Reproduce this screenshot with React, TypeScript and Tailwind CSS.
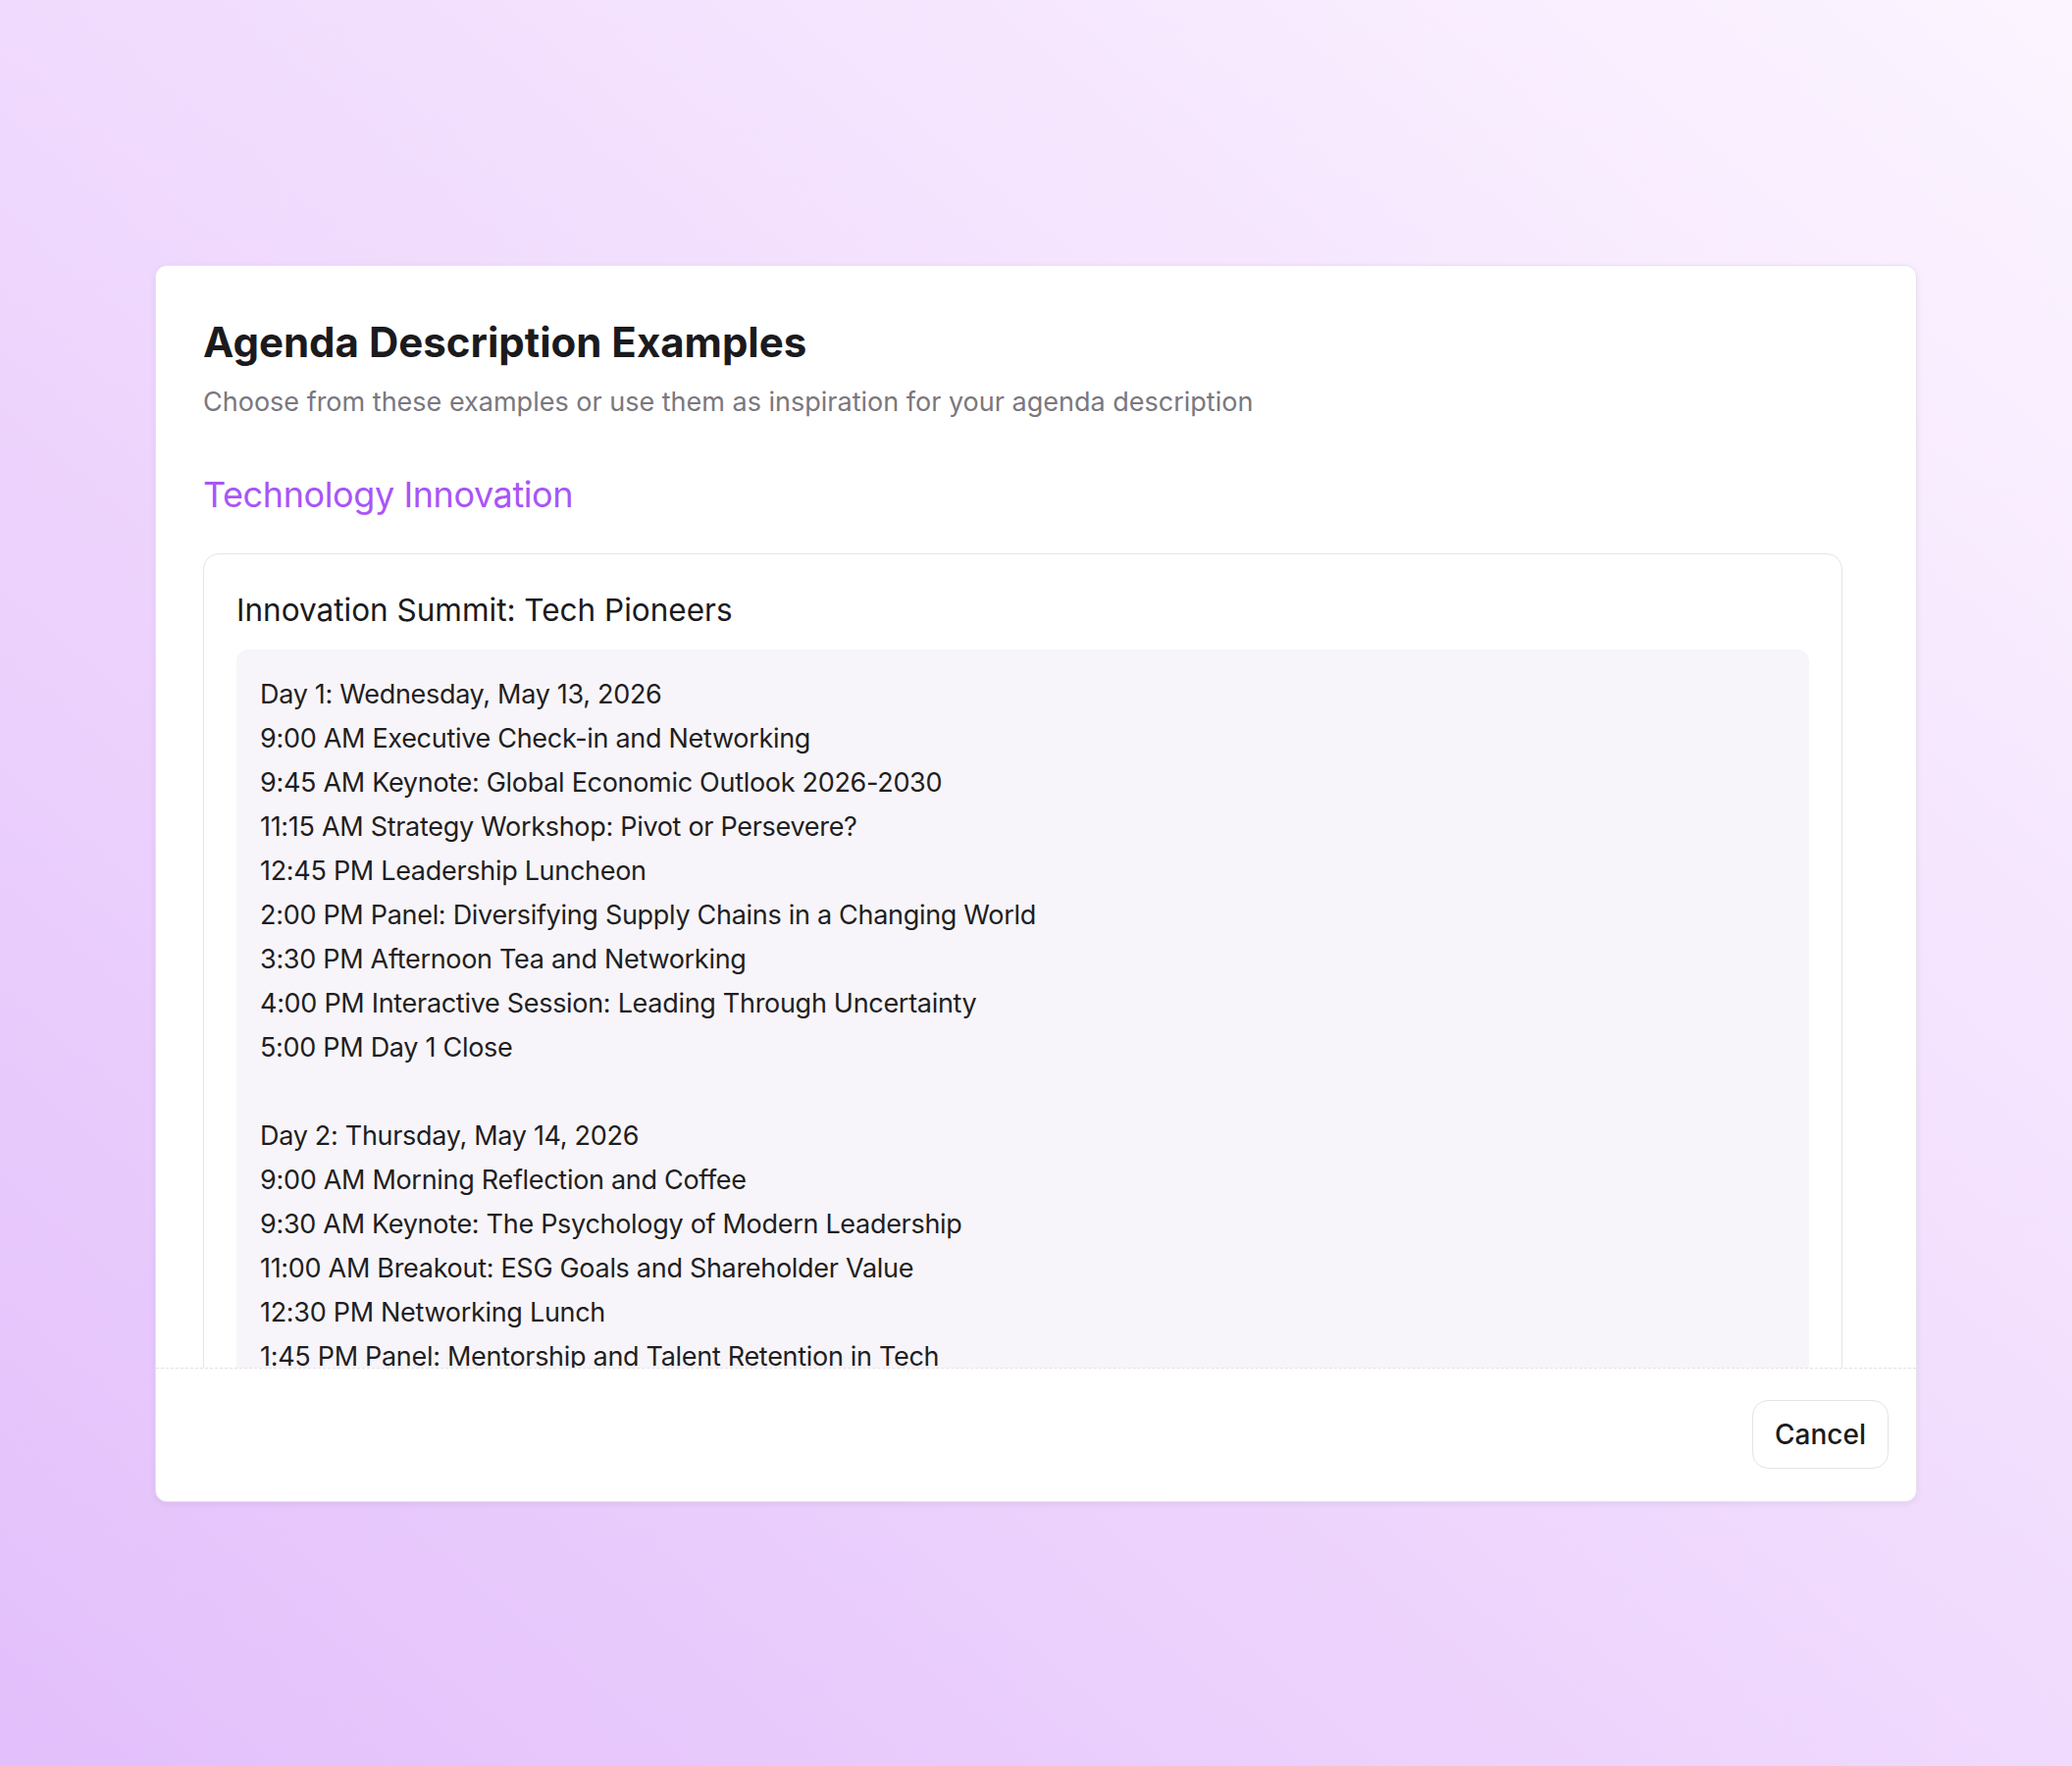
const day1 = [
  "Day 1: Wednesday, May 13, 2026",
  "9:00 AM Executive Check-in and Networking",
  "9:45 AM Keynote: Global Economic Outlook 2026-2030",
  "11:15 AM Strategy Workshop: Pivot or Persevere?",
  "12:45 PM Leadership Luncheon",
  "2:00 PM Panel: Diversifying Supply Chains in a Changing World",
  "3:30 PM Afternoon Tea and Networking",
  "4:00 PM Interactive Session: Leading Through Uncertainty",
  "5:00 PM Day 1 Close",
];

const day2 = [
  "Day 2: Thursday, May 14, 2026",
  "9:00 AM Morning Reflection and Coffee",
  "9:30 AM Keynote: The Psychology of Modern Leadership",
  "11:00 AM Breakout: ESG Goals and Shareholder Value",
  "12:30 PM Networking Lunch",
  "1:45 PM Panel: Mentorship and Talent Retention in Tech",
  "3:00 PM Closing Keynote: Building the Next Decade",
  "4:30 PM Farewell Reception",
];

export default function App() {
  return (
    <div
      className="min-h-screen w-full flex items-center justify-center bg-linear-to-bl from-[#fcf5ff] via-[#f0dafd] to-[#e3bffb]"
      style={{ fontFamily: "Inter, 'Noto Sans', sans-serif" }}
    >
      <div className="w-[1796px] h-[1261px] flex flex-col bg-white rounded-xl border border-[#e6e2ea] shadow-[0_2px_6px_rgba(80,40,120,0.08)] overflow-hidden">

        {/* Scrollable body */}
        <div className="flex-1 overflow-hidden pl-[48px] pr-[75px] pt-[48px]">
          <h2 className="text-[42px] leading-[60px] font-bold text-[#1b1a1d]">
            Agenda Description Examples
          </h2>
          <p className="mt-[11px] text-[27px] leading-[40px] text-[#7a777e]">
            Choose from these examples or use them as inspiration for your agenda description
          </p>

          <h3 className="mt-[50px] text-[36px] leading-[48px] text-[#a855f7] tracking-[-0.4px]">
            Technology Innovation
          </h3>

          <div className="mt-[36px] rounded-2xl border border-[#e6e3e9] bg-white px-[33px] pt-[36px] pb-[33px]">
            <h4 className="text-[31.5px] leading-[42px] text-[#1b1a1d]">
              Innovation Summit: Tech Pioneers
            </h4>
            <div className="mt-[19px] rounded-xl bg-[#f7f5f9] px-[24px] py-[23px] text-[27px] leading-[45px] text-[#1f1e22] tracking-[-0.3px]">
              {day1.map((l) => (
                <div key={l}>{l}</div>
              ))}
              <div className="h-[45px]" />
              {day2.map((l) => (
                <div key={l}>{l}</div>
              ))}
            </div>
          </div>
        </div>

        {/* Footer */}
        <div className="h-[136px] shrink-0 border-t border-dashed border-[#e4e1e7] flex items-center justify-end pr-[28px]">
          <button className="h-[70px] w-[139px] rounded-2xl border border-[#e6e2ea] bg-white text-[28px] font-medium text-[#1b1a1d]">
            Cancel
          </button>
        </div>
      </div>
    </div>
  );
}
